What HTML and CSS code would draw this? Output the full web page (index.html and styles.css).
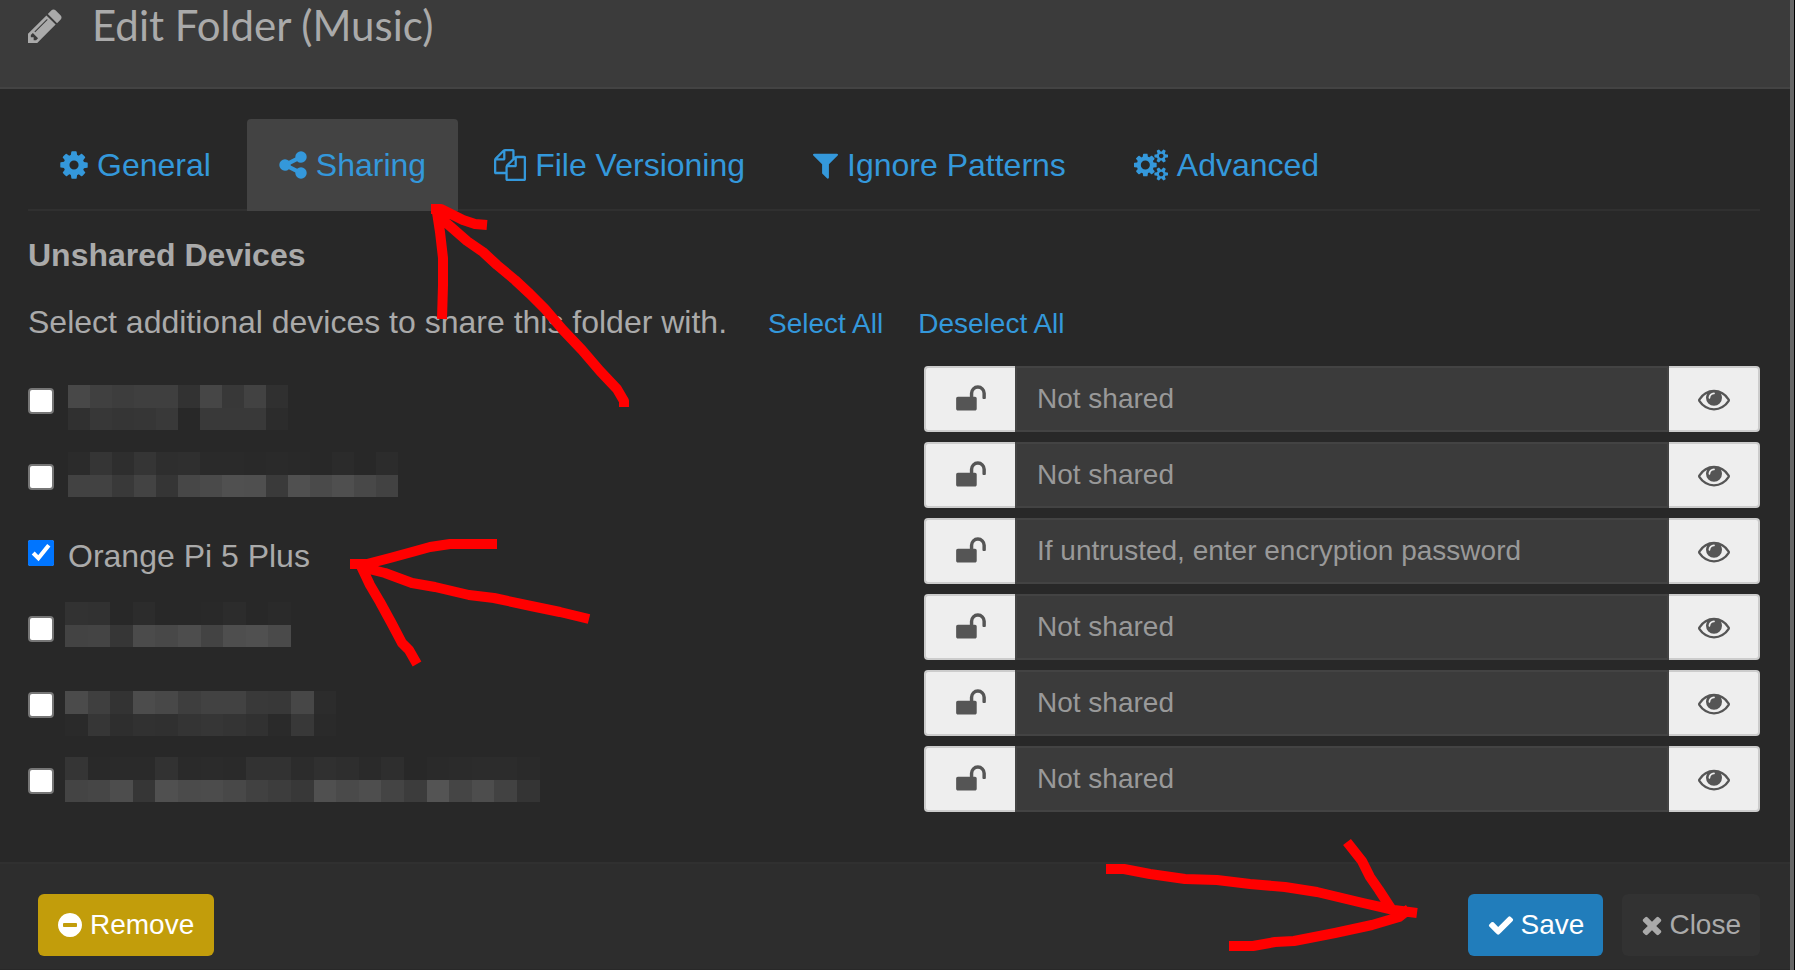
FILE: index.html
```html
<!DOCTYPE html>
<html lang="en">
<head>
<meta charset="utf-8">
<title>Edit Folder (Music)</title>
<link rel="stylesheet" href="styles.css">
</head>
<body>
<svg class="sprite" aria-hidden="true">
  <symbol id="pencil" viewBox="128 0 1536 1792"><path d="M491 1536l91-91-235-235-91 91v107h128v128h107zm523-928q0-22-22-22-10 0-17 7l-542 542q-7 7-7 17 0 22 22 22 10 0 17-7l542-542q7-7 7-17zm-54-192l416 416-832 832h-416v-416zm683 96q0 53-37 90l-166 166-416-416 166-165q36-38 90-38 53 0 91 38l235 234q37 39 37 91z"/></symbol>
  <symbol id="cog" viewBox="128 0 1536 1792"><path d="M1152 896q0-106-75-181t-181-75-181 75-75 181 75 181 181 75 181-75 75-181zm512-109v222q0 12-8 23t-20 13l-185 28q-19 54-39 91 35 50 107 138 10 12 10 25t-9 23q-27 37-99 108t-94 71q-12 0-26-9l-138-108q-44 23-91 38-16 136-29 186-7 28-36 28h-222q-14 0-24.5-8.5t-11.5-21.5l-28-184q-49-16-90-37l-141 107q-10 9-25 9-14 0-25-11-126-114-165-168-7-10-7-23 0-12 8-23 15-21 51-66.5t54-70.5q-27-50-41-99l-183-27q-13-2-21-12.5t-8-23.5v-222q0-12 8-23t19-13l186-28q14-46 39-92-40-57-107-138-10-12-10-24 0-10 9-23 26-36 98.5-107.5t94.5-71.5q13 0 26 10l138 107q44-23 91-38 16-136 29-186 7-28 36-28h222q14 0 24.5 8.5t11.5 21.5l28 184q49 16 90 37l142-107q9-9 24-9 13 0 25 10 129 119 165 170 7 8 7 22 0 12-8 23-15 21-51 66.5t-54 70.5q26 50 41 98l183 28q13 2 21 12.5t8 23.5z"/></symbol>
  <symbol id="share" viewBox="128 0 1536 1792"><path d="M1344 1024q133 0 226.5 93.5t93.5 226.5-93.5 226.5-226.5 93.5-226.5-93.5-93.5-226.5q0-12 2-34l-360-180q-92 86-218 86-133 0-226.5-93.5t-93.5-226.5 93.5-226.5 226.5-93.5q126 0 218 86l360-180q-2-22-2-34 0-133 93.5-226.5t226.5-93.5 226.5 93.5 93.5 226.5-93.5 226.5-226.5 93.5q-126 0-218-86l-360 180q2 22 2 34t-2 34l360 180q92-86 218-86z"/></symbol>
  <symbol id="files" viewBox="0 0 1792 1792"><path d="M1696 384q40 0 68 28t28 68v1216q0 40-28 68t-68 28h-960q-40 0-68-28t-28-68v-288h-544q-40 0-68-28t-28-68v-672q0-40 20-88t48-76l408-408q28-28 76-48t88-20h416q40 0 68 28t28 68v328q68-40 128-40h416zm-544 213l-299 299h299v-299zm-640-384l-299 299h299v-299zm196 647l316-316v-416h-384v416q0 40-28 68t-68 28h-416v640h512v-256q0-40 20-88t48-76zm956 804v-1152h-384v416q0 40-28 68t-68 28h-416v640h896z"/></symbol>
  <symbol id="filter" viewBox="192 0 1408 1792"><path d="M1595 295q17 41-14 70l-493 493v742q0 42-39 59-13 5-25 5-27 0-45-19l-256-256q-19-19-19-45v-486l-493-493q-31-29-14-70 17-39 59-39h1280q42 0 59 39z"/></symbol>
  <symbol id="cogs" viewBox="0 0 1920 1792"><path d="M896 896q0-106-75-181t-181-75-181 75-75 181 75 181 181 75 181-75 75-181zm768 512q0-52-38-90t-90-38-90 38-38 90q0 53 37.5 90.5t90.5 37.5 90.5-37.5 37.5-90.5zm0-1024q0-52-38-90t-90-38-90 38-38 90q0 53 37.5 90.5t90.5 37.5 90.5-37.5 37.5-90.5zm-384 421v185q0 10-7 19.5t-16 10.5l-155 24q-11 35-32 76 34 48 90 115 7 11 7 20 0 12-7 19-23 30-82.5 89.5t-78.5 59.5q-11 0-21-7l-115-90q-37 19-77 31-11 108-23 155-7 24-30 24h-186q-11 0-20-7.5t-10-17.5l-23-153q-34-10-75-31l-118 89q-7 7-20 7-11 0-21-8-144-133-144-160 0-9 7-19 10-14 41-53t47-61q-23-44-35-82l-152-24q-10-1-17-9.5t-7-19.5v-185q0-10 7-19.5t16-10.5l155-24q11-35 32-76-34-48-90-115-7-11-7-20 0-12 7-20 22-30 82-89t79-59q11 0 21 7l115 90q34-18 77-32 11-108 23-154 7-24 30-24h186q11 0 20 7.5t10 17.5l23 153q34 10 75 31l118-89q8-7 20-7 11 0 21 8 144 133 144 160 0 8-7 19-12 16-42 54t-45 60q23 48 34 82l152 23q10 2 17 10.5t7 19.5zm640 533v140q0 16-149 31-12 27-30 52 51 113 51 138 0 4-4 7-122 71-124 71-8 0-46-47t-52-68q-20 2-30 2t-30-2q-14 21-52 68t-46 47q-2 0-124-71-4-3-4-7 0-25 51-138-18-25-30-52-149-15-149-31v-140q0-16 149-31 13-29 30-52-51-113-51-138 0-4 4-7 4-2 35-20t59-34 30-16q8 0 46 46.5t52 67.5q20-2 30-2t30 2q51-71 92-112l6-2q4 0 124 70 4 3 4 7 0 25-51 138 17 23 30 52 149 15 149 31zm0-1024v140q0 16-149 31-12 27-30 52 51 113 51 138 0 4-4 7-122 71-124 71-8 0-46-47t-52-68q-20 2-30 2t-30-2q-14 21-52 68t-46 47q-2 0-124-71-4-3-4-7 0-25 51-138-18-25-30-52-149-15-149-31v-140q0-16 149-31 13-29 30-52-51-113-51-138 0-4 4-7 4-2 35-20t59-34 30-16q8 0 46 46.5t52 67.5q20-2 30-2t30 2q51-71 92-112l6-2q4 0 124 70 4 3 4 7 0 25-51 138 17 23 30 52 149 15 149 31z"/></symbol>
  <symbol id="unlock" viewBox="0 0 1792 1792"><path d="M1728 576v256q0 26-19 45t-45 19h-64q-26 0-45-19t-19-45v-256q0-106-75-181t-181-75-181 75-75 181v192h96q40 0 68 28t28 68v576q0 40-28 68t-68 28h-960q-40 0-68-28t-28-68v-576q0-40 28-68t68-28h672v-192q0-185 131.5-316.5t316.5-131.5 316.5 131.5 131.5 316.5z"/></symbol>
  <symbol id="eye" viewBox="0 0 1792 1792"><path d="M1664 960q-152-236-381-353 61 104 61 225 0 185-131.5 316.5t-316.5 131.5-316.5-131.5-131.5-316.5q0-121 61-225-229 117-381 353 133 205 333.5 326.5t434.5 121.5 434.5-121.5 333.5-326.5zm-720-384q0-20-14-34t-34-14q-125 0-214.5 89.5t-89.5 214.5q0 20 14 34t34 14 34-14 14-34q0-86 61-147t147-61q20 0 34-14t14-34zm848 384q0 34-20 69-140 230-376.5 368.5t-499.5 138.5-499.5-139-376.5-368q-20-35-20-69t20-69q140-229 376.5-368t499.5-139 499.5 139 376.5 368q20 35 20 69z"/></symbol>
  <symbol id="minus" viewBox="128 0 1536 1792"><path d="M1344 960v-128q0-26-19-45t-45-19h-768q-26 0-45 19t-19 45v128q0 26 19 45t45 19h768q26 0 45-19t19-45zm320-64q0 209-103 385.5t-279.5 279.5-385.5 103-385.5-103-279.5-279.5-103-385.5 103-385.5 279.5-279.5 385.5-103 385.5 103 279.5 279.5 103 385.5z"/></symbol>
  <symbol id="check" viewBox="0 0 1792 1792"><path d="M1671 566q0 40-28 68l-724 724-136 136q-28 28-68 28t-68-28l-136-136-362-362q-28-28-28-68t28-68l136-136q28-28 68-28t68 28l294 295 656-657q28-28 68-28t68 28l136 136q28 28 28 68z"/></symbol>
  <symbol id="times" viewBox="192 0 1408 1792"><path d="M1490 1322q0 40-28 68l-136 136q-28 28-68 28t-68-28l-294-294-294 294q-28 28-68 28t-68-28l-136-136q-28-28-28-68t28-68l294-294-294-294q-28-28-28-68t28-68l136-136q28-28 68-28t68 28l294 294 294-294q28-28 68-28t68 28l136 136q28 28 28 68t-28 68l-294 294 294 294q28 28 28 68z"/></symbol>
</svg>

<main class="modal">
  <header class="modal-header">
    <svg class="icon title-icon" aria-hidden="true"><use href="#pencil"/></svg>
    <h1 class="title">Edit Folder (Music)</h1>
  </header>

  <div class="modal-body">
    <nav class="tabs">
      <a class="tab" href="#general"><svg class="icon w28" aria-hidden="true"><use href="#cog"/></svg>General</a>
      <a class="tab active" href="#sharing" aria-current="page"><svg class="icon w28" aria-hidden="true"><use href="#share"/></svg>Sharing</a>
      <a class="tab" href="#versioning"><svg class="icon w32" aria-hidden="true"><use href="#files"/></svg>File Versioning</a>
      <a class="tab" href="#ignores"><svg class="icon w25" aria-hidden="true"><use href="#filter"/></svg>Ignore Patterns</a>
      <a class="tab" href="#advanced"><svg class="icon w34" aria-hidden="true"><use href="#cogs"/></svg>Advanced</a>
    </nav>

    <h2 class="section-title">Unshared Devices</h2>
    <p class="help">Select additional devices to share this folder with.
      <span class="help-links"><a href="#all">Select All</a><a href="#none">Deselect All</a></span>
    </p>

    <div class="devices">
      <div class="device">
        <label class="name"><input type="checkbox" aria-label="Device 1"><svg class="mosaic" data-device="a"></svg></label>
        <div class="secret"><span class="addon"><svg class="icon w32" aria-hidden="true"><use href="#unlock"/></svg></span><input class="field" type="text" placeholder="Not shared" aria-label="Password for device 1"><button class="addon eye" type="button" aria-label="Show password"><svg class="icon w32"><use href="#eye"/></svg></button></div>
      </div>
      <div class="device">
        <label class="name"><input type="checkbox" aria-label="Device 2"><svg class="mosaic" data-device="b"></svg></label>
        <div class="secret"><span class="addon"><svg class="icon w32" aria-hidden="true"><use href="#unlock"/></svg></span><input class="field" type="text" placeholder="Not shared" aria-label="Password for device 2"><button class="addon eye" type="button" aria-label="Show password"><svg class="icon w32"><use href="#eye"/></svg></button></div>
      </div>
      <div class="device">
        <label class="name"><input type="checkbox" checked><span class="device-text">Orange Pi 5 Plus</span></label>
        <div class="secret"><span class="addon"><svg class="icon w32" aria-hidden="true"><use href="#unlock"/></svg></span><input class="field" type="text" placeholder="If untrusted, enter encryption password" aria-label="Password for Orange Pi 5 Plus"><button class="addon eye" type="button" aria-label="Show password"><svg class="icon w32"><use href="#eye"/></svg></button></div>
      </div>
      <div class="device">
        <label class="name"><input type="checkbox" aria-label="Device 4"><svg class="mosaic" data-device="c"></svg></label>
        <div class="secret"><span class="addon"><svg class="icon w32" aria-hidden="true"><use href="#unlock"/></svg></span><input class="field" type="text" placeholder="Not shared" aria-label="Password for device 4"><button class="addon eye" type="button" aria-label="Show password"><svg class="icon w32"><use href="#eye"/></svg></button></div>
      </div>
      <div class="device">
        <label class="name"><input type="checkbox" aria-label="Device 5"><svg class="mosaic" data-device="d"></svg></label>
        <div class="secret"><span class="addon"><svg class="icon w32" aria-hidden="true"><use href="#unlock"/></svg></span><input class="field" type="text" placeholder="Not shared" aria-label="Password for device 5"><button class="addon eye" type="button" aria-label="Show password"><svg class="icon w32"><use href="#eye"/></svg></button></div>
      </div>
      <div class="device">
        <label class="name"><input type="checkbox" aria-label="Device 6"><svg class="mosaic" data-device="e"></svg></label>
        <div class="secret"><span class="addon"><svg class="icon w32" aria-hidden="true"><use href="#unlock"/></svg></span><input class="field" type="text" placeholder="Not shared" aria-label="Password for device 6"><button class="addon eye" type="button" aria-label="Show password"><svg class="icon w32"><use href="#eye"/></svg></button></div>
      </div>
    </div>
  </div>

  <footer class="modal-footer">
    <button class="btn remove" type="button"><svg class="icon w24" aria-hidden="true"><use href="#minus"/></svg>Remove</button>
    <button class="btn save" type="button"><svg class="icon w28 h28" aria-hidden="true"><use href="#check"/></svg>Save</button>
    <button class="btn close" type="button"><svg class="icon w22" aria-hidden="true"><use href="#times"/></svg>Close</button>
  </footer>
</main>

<svg class="marks" viewBox="0 0 1795 970" aria-hidden="true">
  <path d="M431 209H441L463 220L475 224L487 225M436 206L440 232L443 258L443 285L442 319M436 214L451 227L467 241L483 252L497 265L515 280L530 294L545 309L563 330L582 350L600 371L617 389L624 401L624 407"/>
  <path d="M350 564H367L390 558L412 552L430 547L450 544H497M365 568L385 573L412 583L435 587L469 595L494 598L531 606L560 612L589 619M361 566L370 585L380 602L392 624L402 643L409 650L417 664"/>
  <path d="M1106 869H1124L1150 874L1185 879L1217 880L1250 884L1285 887L1317 892L1363 903L1394 910L1417 913M1347 842L1362 861L1370 877L1379 890L1392 910M1229 946H1253L1275 942L1294 941L1335 933L1372 925L1399 917L1409 909"/>
</svg>
<script src="mosaic.js"></script>
</body>
</html>
```

FILE: styles.css
```css
* { box-sizing: border-box; }

body {
  margin: 0;
  padding-right: 1px;
  background: #000;
  color: #aaa;
  font: 32px/46px "Liberation Sans", Arial, sans-serif;
  position: relative;
}

a { color: #3498db; text-decoration: none; }
.sprite { display: none; }

.modal {
  background: #282828;
  border-right: 4px solid #666;
  min-height: 100vh;
}

.modal-header {
  display: flex;
  align-items: flex-start;
  gap: 30px;
  padding: 0 30px 36px 28px;
  background: #3b3b3b;
  border-bottom: 2px solid #434343;
}
.title {
  margin: 0;
  font: 400 42px/51px Lato, sans-serif;
}

.icon { flex: none; height: 32px; fill: currentColor; }
.title-icon { width: 34px; height: 40px; margin-top: 6px; }
.w22 { width: 22px; height: 28px; }
.w24 { width: 24px; height: 28px; }
.w25 { width: 25px; }
.w28 { width: 28px; }
.w32 { width: 32px; }
.w34 { width: 34px; }
.h28 { height: 28px; }

.modal-body { padding: 30px 30px 50px 28px; }

.tabs {
  display: flex;
  gap: 4px;
  border-bottom: 2px solid #303030;
}
.tab {
  display: flex;
  align-items: center;
  gap: 9px;
  height: 92px;
  margin-bottom: -2px;
  padding: 0 32px;
  border-radius: 4px 4px 0 0;
}
.tab.active { background: #434343; }

.section-title { margin: 21px 0 0; font: 700 32px/46px "Liberation Sans", Arial, sans-serif; }
.help { display: flex; align-items: baseline; gap: 41px; margin: 21px 0 19px; }
.help-links { display: flex; gap: 35px; font-size: 28px; }

.devices { display: grid; gap: 10px; }
.device { display: grid; grid-template-columns: 1fr 1fr; gap: 60px; }
.name { display: flex; align-items: flex-start; gap: 11px; }
.name input { flex: none; width: 26px; height: 26px; margin: 22px 0 0; }
.name input:not(:checked) {
  appearance: none;
  background: #fff;
  border: 2px solid #767676;
  border-radius: 4px;
}
.device-text { padding: 15px 0 0 3px; }
.mosaic { width: 480px; height: 66px; }

.secret { display: flex; height: 66px; }
.addon {
  display: flex;
  align-items: center;
  justify-content: center;
  width: 91px;
  padding: 0;
  background: #eee;
  color: #555;
  border: 2px solid #ccc;
  border-right: 0;
  border-radius: 4px 0 0 4px;
}
.addon.eye {
  border-right: 2px solid #ccc;
  border-left: 0;
  border-radius: 0 4px 4px 0;
}
.field {
  flex: 1;
  min-width: 0;
  padding: 0 20px;
  background: #3b3b3b;
  border: 2px solid #434343;
  border-radius: 0;
  color: #aaa;
  font: 28px/40px "Liberation Sans", Arial, sans-serif;
}
.field::placeholder { color: #999; opacity: 1; }

.modal-footer {
  display: flex;
  gap: 19px;
  padding: 30px 30px 13px 38px;
  background: #2d2d2d;
  border-top: 2px solid #303030;
}
.btn {
  display: flex;
  align-items: center;
  gap: 6px;
  height: 62px;
  padding: 0 19px;
  border: 0;
  border-radius: 6px;
  color: #fff;
  font: 28px/40px "Liberation Sans", Arial, sans-serif;
}
.remove { gap: 8px; margin-right: auto; padding: 0 20px; background: #c29d0b; }
.save { background: #217dbb; }
.close { background: #323232; color: #aaa; }

.marks {
  position: absolute;
  top: 0;
  left: 0;
  width: 1795px;
  height: 970px;
  fill: none;
  stroke: #f00;
  stroke-width: 10px;
  stroke-linejoin: round;
  pointer-events: none;
}
```

FILE: mosaic.js
```js
// Hidden device names: two rows of grey cells each, given as hex grey levels.
const names = {
  a: { x: 3, y: 19, w: 22, rows: ["48 40 3d 3f 3f 32 46 38 42 30", "30 37 35 36 39 28 39 39 39 2c"] },
  b: { x: 3, y: 10, w: 22, rows: ["2b 35 2e 35 2e 2f 2a 2a 29 2a 29 28 2b 28 2c", "42 42 39 43 35 47 4a 50 4f 3a 50 4a 4f 48 42"] },
  c: { x: 0, y: 8, w: 22.6, rows: ["32 31 28 2c 28 28 29 2c 28 2a", "43 44 36 4b 48 4d 43 4e 50 4a"] },
  d: { x: 0, y: 21, w: 22.6, rows: ["4b 3f 33 4c 48 3e 42 42 39 38 47 2c", "2a 36 2e 31 30 34 36 34 31 2a 38 2a"] },
  e: { x: 0, y: 11, w: 22.6, rows: ["35 29 2a 2a 32 2a 2b 2a 32 32 2c 30 2e 2a 2e 28 2a 2b 2c 2c 2a", "44 46 4d 36 50 4b 4c 48 41 3d 38 50 4a 4e 44 3c 54 45 4d 42 34"] }
};
for (const svg of document.querySelectorAll(".mosaic")) {
  const m = names[svg.dataset.device];
  m.rows.forEach((row, r) => row.split(" ").forEach((g, i) => {
    const cell = document.createElementNS("http://www.w3.org/2000/svg", "rect");
    const left = Math.round(m.x + i * m.w);
    cell.setAttribute("x", left);
    cell.setAttribute("y", m.y + r * 22 + (r ? 1 : 0));
    cell.setAttribute("width", Math.round(m.x + (i + 1) * m.w) - left);
    cell.setAttribute("height", r ? 22 : 23);
    cell.setAttribute("fill", "#" + g + g + g);
    svg.append(cell);
  }));
}
```
